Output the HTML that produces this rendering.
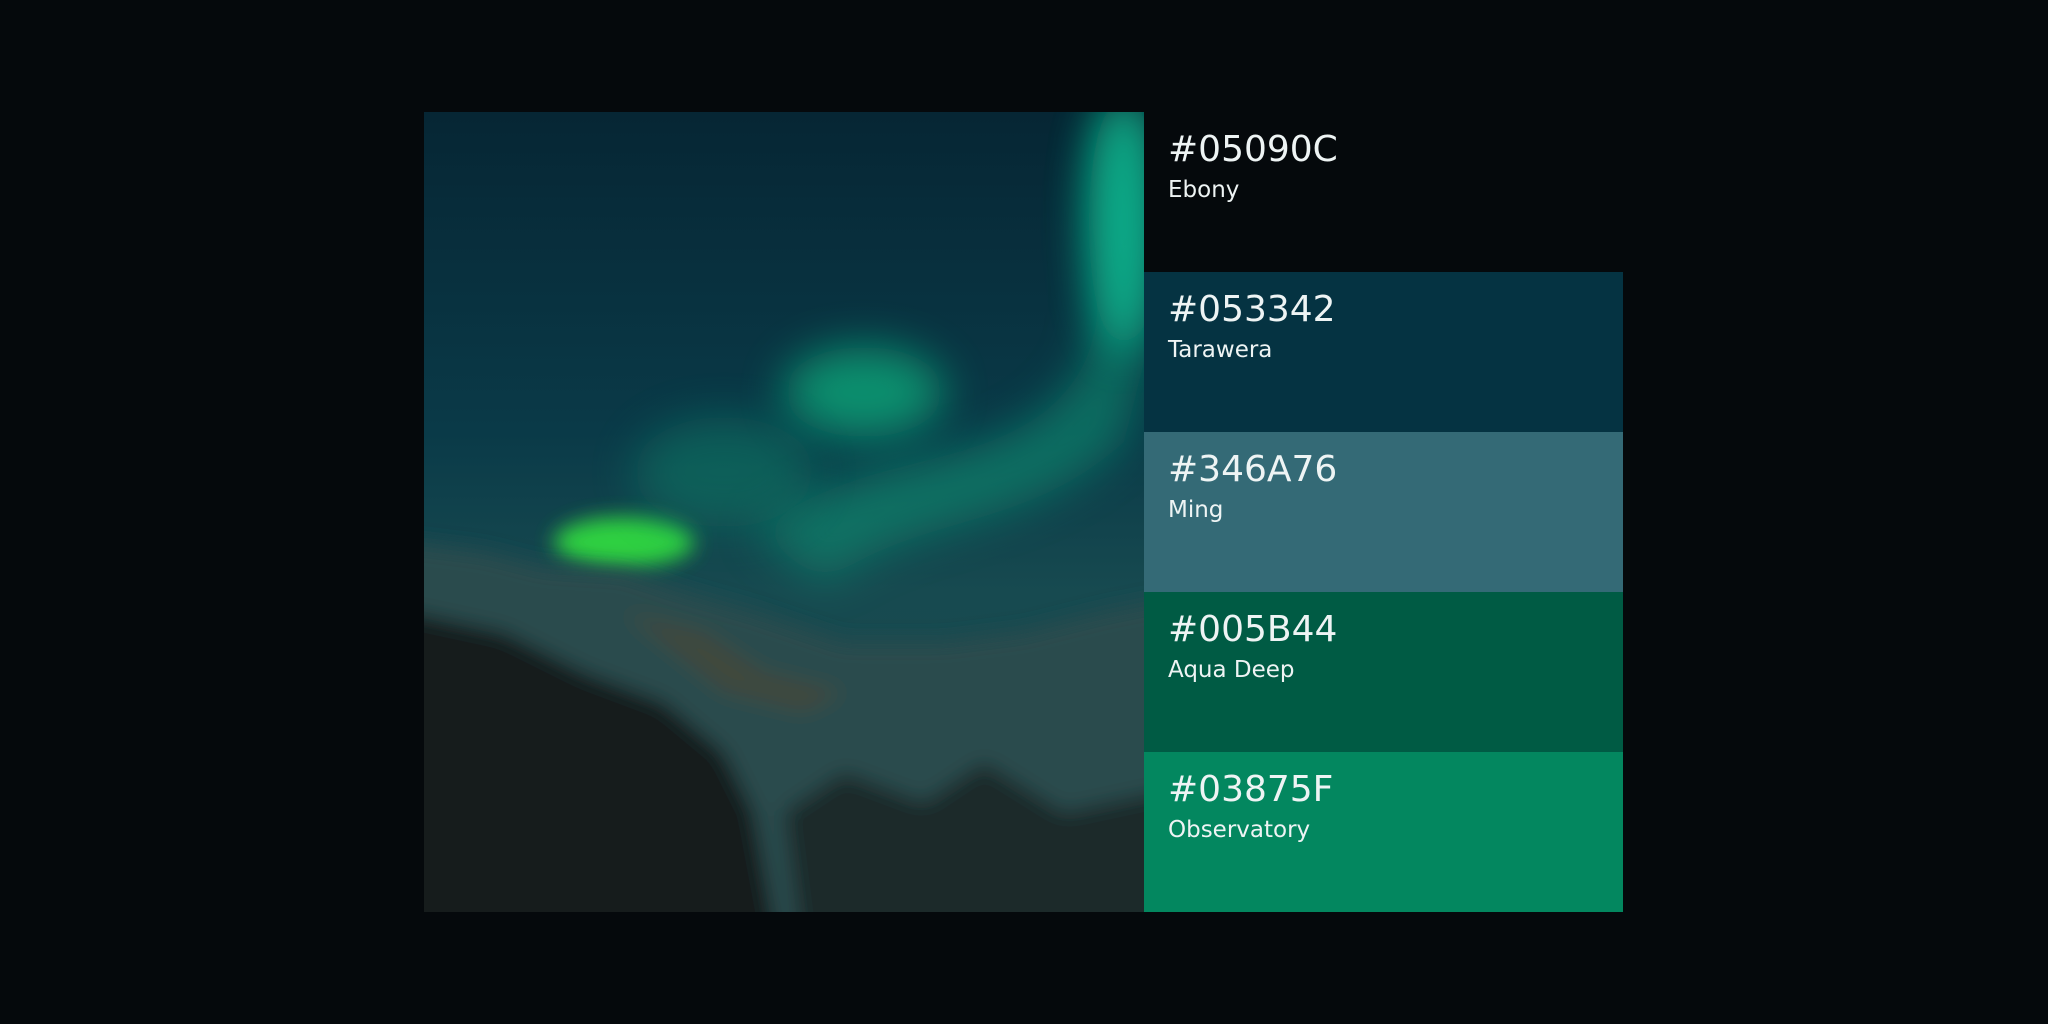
<!DOCTYPE html>
<html><head><meta charset="utf-8"><style>
html,body{margin:0;padding:0;background:#05090C;width:2048px;height:1024px;overflow:hidden}
.img{position:absolute;left:424px;top:112px;width:720px;height:800px;overflow:hidden;background:linear-gradient(180deg,#062634 0%,#0a3a48 40%,#174a50 60%,#1c4a4c 100%)}
.sw{position:absolute;left:1144px;width:479px;height:160px;font-family:"DejaVu Sans","Liberation Sans",sans-serif;color:#eef4f4;box-sizing:border-box;padding-left:24px}
.h{font-size:36px;line-height:40px;padding-top:18px}
.n{font-size:23px;line-height:30px;margin-top:5px}
</style></head><body>
<div class="img">
<svg width="720" height="800" viewBox="0 0 720 800">
<defs>
<filter id="b" x="-100%" y="-100%" width="300%" height="300%"><feGaussianBlur stdDeviation="22"/></filter>
<filter id="b2" x="-100%" y="-100%" width="300%" height="300%"><feGaussianBlur stdDeviation="10"/></filter>
</defs>
<path d="M680 0 C640 120 720 220 620 300 C540 360 440 340 330 420 L400 470 C500 400 600 420 700 330 L720 250 L720 0Z" fill="#08a07a" opacity=".5" filter="url(#b)"/>
<ellipse cx="700" cy="110" rx="35" ry="130" fill="#10d0a0" opacity=".7" filter="url(#b)"/>
<ellipse cx="440" cy="280" rx="80" ry="45" fill="#10d890" opacity=".55" filter="url(#b)"/>
<ellipse cx="200" cy="430" rx="70" ry="25" fill="#30e040" opacity=".9" filter="url(#b2)"/>
<ellipse cx="300" cy="360" rx="90" ry="55" fill="#0a9070" opacity=".4" filter="url(#b)"/>
<g filter="url(#b2)">
<path d="M-60 425 L60 440 L120 455 L200 460 L260 480 L330 500 L420 530 L520 530 L600 520 L680 500 L780 480 L780 860 L-60 860Z" fill="#2a4c4e"/>
<path d="M-60 490 L80 520 L160 560 L240 590 L300 640 L330 700 L360 860 L-60 860Z" fill="#151c1c"/>
<path d="M200 500 L280 520 L340 560 L420 580 L380 600 L300 580Z" fill="#4a4a38" opacity=".7"/>
<path d="M360 700 L420 660 L500 690 L560 650 L640 700 L780 670 L780 860 L380 860Z" fill="#1a2a2a"/>
</g>
</svg>
</div>
<div class="sw" style="top:112px;background:#05090C"><div class="h">#05090C</div><div class="n">Ebony</div></div>
<div class="sw" style="top:272px;background:#053342"><div class="h">#053342</div><div class="n">Tarawera</div></div>
<div class="sw" style="top:432px;background:#346A76"><div class="h">#346A76</div><div class="n">Ming</div></div>
<div class="sw" style="top:592px;background:#005B44"><div class="h">#005B44</div><div class="n">Aqua Deep</div></div>
<div class="sw" style="top:752px;background:#03875F"><div class="h">#03875F</div><div class="n">Observatory</div></div>
</body></html>
